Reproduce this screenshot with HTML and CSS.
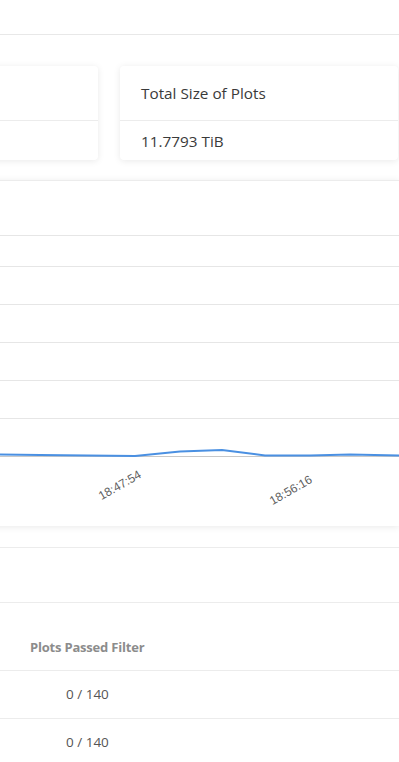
FILE: index.html
```html
<!DOCTYPE html>
<html>
<head>
<meta charset="utf-8">
<link rel="stylesheet" href="styles.css">
</head>
<body>
<div class="topbar"></div>
<div class="stats">
  <div class="card stat">
    <div class="card-head"></div>
    <div class="card-body"></div>
  </div>
  <div class="card stat">
    <div class="card-head">Total Size of Plots</div>
    <div class="card-body">11.7793 TiB</div>
  </div>
</div>
<div class="card chart">
  <svg class="chart-svg" width="399" height="346" viewBox="0 0 399 346">
    <line x1="0" y1="55.5" x2="399" y2="55.5" stroke="#e6e6e6"/>
    <line x1="0" y1="86.5" x2="399" y2="86.5" stroke="#e6e6e6"/>
    <line x1="0" y1="124.5" x2="399" y2="124.5" stroke="#e6e6e6"/>
    <line x1="0" y1="162.5" x2="399" y2="162.5" stroke="#e6e6e6"/>
    <line x1="0" y1="200.5" x2="399" y2="200.5" stroke="#e6e6e6"/>
    <line x1="0" y1="238.5" x2="399" y2="238.5" stroke="#e6e6e6"/>
    <line x1="0" y1="276.5" x2="399" y2="276.5" stroke="#c8c8c8"/>
    <polyline fill="none" stroke="#4a90e2" stroke-width="2" points="0,274.5 40,275 135,276 180,271.5 222,270 265,275.5 310,275.5 350,274.5 399,275.5"/>
    <text class="tick" transform="translate(142 297) rotate(-30)" text-anchor="end">18:47:54</text>
    <text class="tick" transform="translate(313 302) rotate(-30)" text-anchor="end">18:56:16</text>
  </svg>
</div>
<div class="card table-card">
  <div class="table-title"></div>
  <table class="tbl">
    <thead>
      <tr><th>Plots Passed Filter</th></tr>
    </thead>
    <tbody>
      <tr><td>0 / 140</td></tr>
      <tr><td>0 / 140</td></tr>
    </tbody>
  </table>
</div>
</body>
</html>
```
FILE: styles.css
```css
html, body {
  margin: 0;
  padding: 0;
  background: #fff;
  overflow: hidden;
  width: 399px;
  height: 762px;
  font-family: "Open Sans", "Noto Sans", sans-serif;
  color: #333;
}
.topbar {
  height: 34px;
  border-bottom: 1px solid #e8e8e8;
}
.stats {
  display: flex;
  gap: 22px;
  margin-left: -180px;
  padding-top: 31px;
  height: 94px;
}
.card {
  background: #fff;
  border-radius: 4px;
  box-shadow: 0 1px 7px rgba(0, 0, 0, 0.09);
}
.stat {
  flex: 0 0 278px;
  display: flex;
  flex-direction: column;
}
.card-head {
  height: 55px;
  box-sizing: border-box;
  border-bottom: 1px solid #ececec;
  padding: 16px 21px 0;
  font-size: 15.3px;
  line-height: 22px;
  color: #3a3a3a;
}
.card-body {
  padding: 9px 21px 0;
  font-size: 15.3px;
  line-height: 22px;
  color: #3a3a3a;
}
.chart {
  margin-top: 20px;
  margin-left: -20px;
  padding-left: 20px;
  height: 346px;
  border-top: 1px solid #ececec;
  box-sizing: border-box;
  border-radius: 0;
}
.chart-svg {
  display: block;
  margin-top: -1px;
}
.tick {
  font-family: "Liberation Sans", Arial, sans-serif;
  font-size: 12px;
  fill: #5f5f5f;
}
.table-card {
  margin-top: 21px;
  border-top: 1px solid #ececec;
  border-radius: 0;
  box-shadow: none;
}
.table-title {
  height: 54px;
  border-bottom: 1px solid #ececec;
}
.tbl {
  border-collapse: collapse;
  width: 100%;
}
.tbl th {
  text-align: left;
  height: 67px;
  box-sizing: border-box;
  padding: 0 0 14px 30px;
  vertical-align: bottom;
  font-size: 13px;
  font-weight: 700;
  color: #8c8c8c;
  border-bottom: 1px solid #ececec;
  letter-spacing: -0.2px;
}
.tbl td {
  height: 48px;
  box-sizing: border-box;
  padding: 0 0 0 66px;
  font-size: 13.5px;
  color: #555;
  border-bottom: 1px solid #ececec;
}
```
